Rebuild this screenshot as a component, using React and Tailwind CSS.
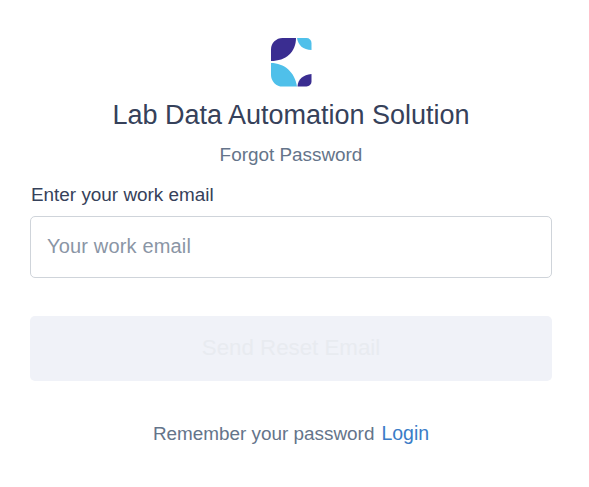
import React from 'react';

function Logo() {
  return (
    <svg width="42" height="50" viewBox="0 0 42 50" className="block">
      <path d="M12.5 0H26C26 14 16 23 1 23V11.5A11.5 11.5 0 0 1 12.5 0Z" fill="#3a2d91" />
      <path d="M27 0H36.5A5 5 0 0 1 41.5 5V12C33 12 28 7 27 0Z" fill="#4fc0ea" />
      <path d="M1 25C14 25 25 34 27 48.5H12.5A11.5 11.5 0 0 1 1 37Z" fill="#4fc0ea" />
      <path d="M27.5 48.5C28 41 33 37 41.5 36V43.5A5 5 0 0 1 36.5 48.5Z" fill="#3a2d91" />
    </svg>
  );
}

export default function App() {
  return (
    <div className="w-[589px] h-[487px] bg-white px-[30px] pt-[38px] font-['Liberation_Sans',sans-serif] overflow-hidden">
      <div className="w-[522px] flex flex-col">
        <div className="flex justify-center">
          <Logo />
        </div>

        <h1 className="mt-[11px] text-center text-[27px] leading-[32px] text-[#36415a]">
          Lab Data Automation Solution
        </h1>
        <p className="mt-[12px] text-center text-[18.9px] leading-[24px] text-[#64748a]">Forgot Password</p>

        <label className="mt-[16px] ml-[1px] text-[18.9px] leading-[24px] text-[#36415a]">Enter your work email</label>
        <input
          type="text"
          placeholder="Your work email"
          className="mt-[9px] h-[62px] w-full rounded-[5px] border border-[#cfd4da] px-4 pb-[2px] text-[20px] tracking-[0.17px] text-[#36415a] placeholder:text-[#8a95a5] outline-none"
        />

        <button
          disabled
          className="mt-[38px] h-[65px] w-full rounded-[5px] bg-[#f0f2f8] pb-[2px] text-[22.3px] text-[#e8ebf0]"
        >
          Send Reset Email
        </button>

        <div className="mt-[40px] flex justify-center items-baseline gap-[7px] text-[18.9px] leading-[24px]">
          <span className="text-[#64748a]">Remember your password</span>
          <a href="#" className="text-[19.5px] text-[#3a7cc7]">Login</a>
        </div>
      </div>
    </div>
  );
}
